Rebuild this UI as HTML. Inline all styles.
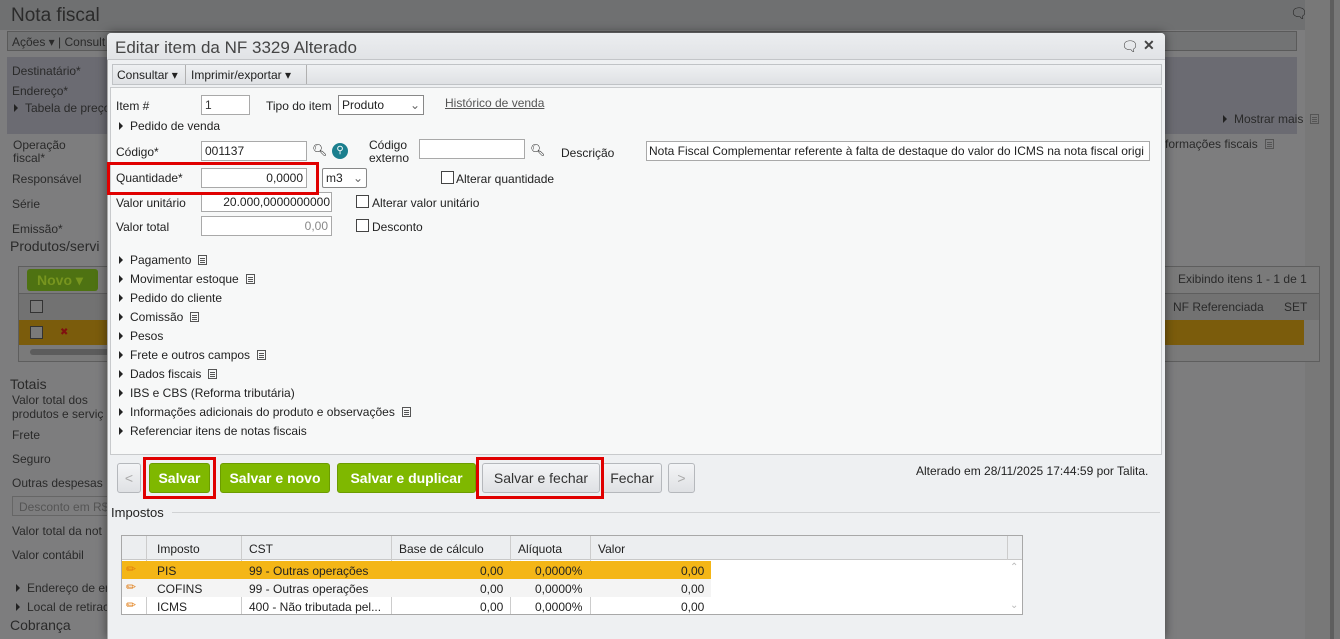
<!DOCTYPE html>
<html><head><meta charset="utf-8"><style>
*{box-sizing:border-box;margin:0;padding:0}
body{width:1340px;height:639px;overflow:hidden;position:relative;background:#7d7d7e;font-family:"Liberation Sans",sans-serif;font-size:12px;color:#222}
.a{position:absolute;white-space:nowrap}
.bg{color:#2a2a2a}
.inp{position:absolute;background:#fff;border:1px solid #a9a9a9;height:20px;font-size:12px;padding:2px 3px;white-space:nowrap;overflow:hidden}
.r{text-align:right}
.tri{display:inline-block;width:0;height:0;border-left:4px solid #222;border-top:4px solid transparent;border-bottom:4px solid transparent;margin-right:7px;vertical-align:0}
.doc{display:inline-block;width:9px;height:10px;border:1px solid #555;margin-left:7px;vertical-align:-1px;background:linear-gradient(#555,#555) 1px 2px/5px 1px no-repeat,linear-gradient(#555,#555) 1px 4px/5px 1px no-repeat,linear-gradient(#555,#555) 1px 6px/5px 1px no-repeat}
.cb{position:absolute;width:13px;height:13px;border:1px solid #444;background:#fff}
.btn{position:absolute;height:30px;top:463px;border-radius:3px;font-size:14px;line-height:28px;text-align:center}
.g{background:#7fb800;color:#fff;font-weight:bold;border:1px solid #6c9c00}
.gr{background:linear-gradient(#f3f4f6,#dfe1e4);border:1px solid #b5b8bc;color:#333}
.red{position:absolute;border:3px solid #e00000}
</style></head><body>
<div class="a" style="left:0;top:0;width:1305px;height:30px;background:#6f7071"></div>
<div class="a" style="left:11px;top:5px;font-size:19px;color:#2b2b2b">Nota fiscal</div>
<div class="a" style="left:1290px;top:5px;font-size:14px;color:#222">🗨 ✕</div>
<div class="a" style="left:1305px;top:0;width:35px;height:639px;background:#787878"></div>
<div class="a" style="left:1330px;top:0;width:4px;height:639px;background:#5e5e5e"></div>
<div class="a" style="left:7px;top:31px;width:1290px;height:20px;background:#727374;border:1px solid #5a5a5a"></div>
<div class="a bg" style="left:12px;top:35px">Ações ▾ | Consult</div>
<div class="a" style="left:7px;top:57px;width:1290px;height:77px;background:#6b6b72"></div>
<div class="a bg" style="left:12px;top:64px">Destinatário*</div>
<div class="a bg" style="left:12px;top:84px">Endereço*</div>
<div class="a bg" style="left:14px;top:101px"><span class="tri"></span>Tabela de preço</div>
<div class="a bg" style="left:13px;top:139px;line-height:13px">Operação<br>fiscal*</div>
<div class="a bg" style="left:12px;top:172px">Responsável</div>
<div class="a bg" style="left:12px;top:197px">Série</div>
<div class="a bg" style="left:12px;top:222px">Emissão*</div>
<div class="a bg" style="left:10px;top:238px;font-size:14px">Produtos/servi</div>
<div class="a bg" style="left:1223px;top:112px"><span class="tri"></span>Mostrar mais<span class="doc"></span></div>
<div class="a bg" style="left:1165px;top:137px">formações fiscais<span class="doc"></span></div>
<div class="a" style="left:18px;top:266px;width:1302px;height:96px;border:1px solid #5e5e5e;background:#7a7a7a"></div>
<div class="a" style="left:27px;top:269px;width:71px;height:22px;background:#4e7212;border-radius:3px;color:#77951e;font-weight:bold;font-size:14px;line-height:22px;padding-left:10px">Novo ▾</div>
<div class="a bg" style="left:1178px;top:272px">Exibindo itens 1 - 1 de 1</div>
<div class="a" style="left:19px;top:293px;width:1300px;height:27px;background:#727272;border-top:1px solid #5e5e5e"></div>
<div class="a bg" style="left:1173px;top:300px">NF Referenciada</div>
<div class="a bg" style="left:1284px;top:300px">SET</div>
<div class="a" style="left:19px;top:320px;width:1285px;height:25px;background:#7b5c0c"></div>
<div class="cb" style="left:30px;top:300px;background:#7a7a7a;border-color:#333"></div>
<div class="cb" style="left:30px;top:326px;background:#7a7a7a;border-color:#333"></div>
<div class="a" style="left:60px;top:327px;color:#801010;font-size:10px">✖</div>
<div class="a" style="left:30px;top:349px;width:80px;height:6px;background:#5c5c5c;border-radius:3px"></div>
<div class="a bg" style="left:10px;top:376px;font-size:14px">Totais</div>
<div class="a bg" style="left:12px;top:393px;line-height:14px">Valor total dos<br>produtos e serviç</div>
<div class="a bg" style="left:12px;top:428px">Frete</div>
<div class="a bg" style="left:12px;top:452px">Seguro</div>
<div class="a bg" style="left:12px;top:476px">Outras despesas</div>
<div class="a" style="left:12px;top:496px;width:100px;height:20px;border:1px solid #666;color:#555;padding:3px 6px">Desconto em R$</div>
<div class="a bg" style="left:12px;top:524px">Valor total da not</div>
<div class="a bg" style="left:12px;top:548px">Valor contábil</div>
<div class="a bg" style="left:16px;top:581px"><span class="tri"></span>Endereço de er</div>
<div class="a bg" style="left:16px;top:600px"><span class="tri"></span>Local de retirac</div>
<div class="a bg" style="left:10px;top:617px;font-size:14px">Cobrança</div>

<div class="a" style="left:107px;top:33px;width:1058px;height:606px;background:#eef0f2;border-left:1px solid #aaa;box-shadow:0 0 10px rgba(0,0,0,.5);border-radius:4px 4px 0 0"></div>
<div class="a" style="left:107px;top:33px;width:1058px;height:27px;background:linear-gradient(#eceef0,#e1e3e6);border-bottom:1px solid #c3c5c8;border-radius:4px 4px 0 0"></div>
<div class="a" style="left:115px;top:38px;font-size:17px;color:#444">Editar item da NF 3329 Alterado</div>
<div class="a" style="left:1121px;top:38px;font-size:14px;color:#444">🗨</div>
<div class="a" style="left:1143px;top:37px;font-size:14px;font-weight:bold;color:#444">✕</div>
<div class="a" style="left:112px;top:64px;width:1050px;height:21px;background:linear-gradient(#eef0f2,#dfe1e4);border:1px solid #c0c3c6"></div>
<div class="a" style="left:117px;top:68px">Consultar ▾</div>
<div class="a" style="left:185px;top:65px;width:1px;height:19px;background:#b0b0b0"></div>
<div class="a" style="left:191px;top:68px">Imprimir/exportar ▾</div>
<div class="a" style="left:306px;top:65px;width:1px;height:19px;background:#b0b0b0"></div>
<div class="a" style="left:110px;top:87px;width:1052px;height:368px;background:#f7f8f8;border:1px solid #c8cacc"></div>

<div class="a" style="left:116px;top:99px">Item #</div>
<div class="inp" style="left:201px;top:95px;width:49px;color:#333">1</div>
<div class="a" style="left:266px;top:99px">Tipo do item</div>
<div class="inp" style="left:338px;top:95px;width:86px;border-color:#888">Produto<span style="float:right;color:#666">⌄</span></div>
<div class="a" style="left:445px;top:96px;color:#555;text-decoration:underline">Histórico de venda</div>
<div class="a" style="left:119px;top:119px"><span class="tri"></span>Pedido de venda</div>
<div class="a" style="left:116px;top:145px">Código*</div>
<div class="inp" style="left:201px;top:141px;width:106px">001137</div>
<div class="a" style="left:312px;top:143px;font-size:12px">&#x1F50D;&#xFE0E;</div>
<div class="a" style="left:332px;top:143px;width:16px;height:16px;border-radius:50%;background:#1b7f8e;color:#fff;font-size:10px;text-align:center;line-height:16px">⚲</div>
<div class="a" style="left:369px;top:139px;line-height:13px">Código<br>externo</div>
<div class="inp" style="left:419px;top:139px;width:106px"></div>
<div class="a" style="left:530px;top:143px">&#x1F50D;&#xFE0E;</div>
<div class="a" style="left:561px;top:146px">Descrição</div>
<div class="inp" style="left:646px;top:141px;width:504px;padding-left:2px">Nota Fiscal Complementar referente à falta de destaque do valor do ICMS na nota fiscal origi</div>
<div class="a" style="left:116px;top:171px">Quantidade*</div>
<div class="inp r" style="left:201px;top:168px;width:106px">0,0000</div>
<div class="inp" style="left:322px;top:168px;width:45px;border-color:#888;border-radius:2px">m3<span style="float:right;color:#666">⌄</span></div>
<div class="cb" style="left:441px;top:171px"></div>
<div class="a" style="left:456px;top:172px">Alterar quantidade</div>
<div class="a" style="left:116px;top:196px">Valor unitário</div>
<div class="inp r" style="left:201px;top:192px;width:131px;padding-right:1px">20.000,0000000000</div>
<div class="cb" style="left:356px;top:195px"></div>
<div class="a" style="left:372px;top:196px">Alterar valor unitário</div>
<div class="a" style="left:116px;top:220px">Valor total</div>
<div class="inp r" style="left:201px;top:216px;width:131px;color:#888">0,00</div>
<div class="cb" style="left:356px;top:219px"></div>
<div class="a" style="left:372px;top:220px">Desconto</div>
<div class="red" style="left:107px;top:162px;width:212px;height:33px"></div>

<div class="a" style="left:119px;top:251px;line-height:19px">
<span class="tri"></span>Pagamento<span class="doc"></span><br>
<span class="tri"></span>Movimentar estoque<span class="doc"></span><br>
<span class="tri"></span>Pedido do cliente<br>
<span class="tri"></span>Comissão<span class="doc"></span><br>
<span class="tri"></span>Pesos<br>
<span class="tri"></span>Frete e outros campos<span class="doc"></span><br>
<span class="tri"></span>Dados fiscais<span class="doc"></span><br>
<span class="tri"></span>IBS e CBS (Reforma tributária)<br>
<span class="tri"></span>Informações adicionais do produto e observações<span class="doc"></span><br>
<span class="tri"></span>Referenciar itens de notas fiscais</div>

<div class="btn gr" style="left:117px;width:24px;color:#aaa">&lt;</div>
<div class="btn g" style="left:149px;width:61px">Salvar</div>
<div class="btn g" style="left:220px;width:110px">Salvar e novo</div>
<div class="btn g" style="left:337px;width:139px">Salvar e duplicar</div>
<div class="btn gr" style="left:482px;width:118px">Salvar e fechar</div>
<div class="btn gr" style="left:602px;width:60px">Fechar</div>
<div class="btn gr" style="left:668px;width:27px;color:#aaa">&gt;</div>
<div class="red" style="left:143px;top:457px;width:73px;height:42px"></div>
<div class="red" style="left:476px;top:457px;width:128px;height:42px"></div>
<div class="a" style="left:916px;top:464px">Alterado em 28/11/2025 17:44:59 por Talita.</div>
<div class="a" style="left:111px;top:505px;font-size:13px">Impostos</div>
<div class="a" style="left:172px;top:512px;width:988px;height:1px;background:#d0d2d4"></div>

<div class="a" style="left:121px;top:535px;width:902px;height:80px;border:1px solid #a8a8a8;background:#fff"></div>
<div class="a" style="left:122px;top:536px;width:900px;height:24px;background:#eceef0;border-bottom:1px solid #c8c8c8"></div>
<div class="a" style="left:146px;top:536px;width:1px;height:78px;background:#ccc"></div>
<div class="a" style="left:241px;top:536px;width:1px;height:78px;background:#ccc"></div>
<div class="a" style="left:391px;top:536px;width:1px;height:78px;background:#ccc"></div>
<div class="a" style="left:510px;top:536px;width:1px;height:78px;background:#ccc"></div>
<div class="a" style="left:590px;top:536px;width:1px;height:78px;background:#ccc"></div>
<div class="a" style="left:1007px;top:536px;width:1px;height:24px;background:#ccc"></div>
<div class="a" style="left:157px;top:542px">Imposto</div>
<div class="a" style="left:249px;top:542px">CST</div>
<div class="a" style="left:399px;top:542px">Base de cálculo</div>
<div class="a" style="left:518px;top:542px">Alíquota</div>
<div class="a" style="left:598px;top:542px">Valor</div>
<div class="a" style="left:122px;top:561px;width:589px;height:18px;background:#f4b617"></div>
<div class="a" style="left:122px;top:579px;width:589px;height:18px;background:#f4f4f4"></div>
<div class="a" style="left:126px;top:562px;color:#e07a10">✏</div>
<div class="a" style="left:126px;top:580px;color:#e07a10">✏</div>
<div class="a" style="left:126px;top:598px;color:#e07a10">✏</div>
<div class="a" style="left:157px;top:564px">PIS</div><div class="a" style="left:249px;top:564px">99 - Outras operações</div><div class="a" style="left:480px;top:564px">0,00</div><div class="a" style="left:535px;top:564px">0,0000%</div><div class="a" style="left:681px;top:564px">0,00</div>
<div class="a" style="left:157px;top:582px">COFINS</div><div class="a" style="left:249px;top:582px">99 - Outras operações</div><div class="a" style="left:480px;top:582px">0,00</div><div class="a" style="left:535px;top:582px">0,0000%</div><div class="a" style="left:681px;top:582px">0,00</div>
<div class="a" style="left:157px;top:600px">ICMS</div><div class="a" style="left:249px;top:600px">400 - Não tributada pel...</div><div class="a" style="left:480px;top:600px">0,00</div><div class="a" style="left:535px;top:600px">0,0000%</div><div class="a" style="left:681px;top:600px">0,00</div>
<div class="a" style="left:1010px;top:562px;color:#bbb;font-size:10px">⌃</div>
<div class="a" style="left:1010px;top:600px;color:#bbb;font-size:10px">⌄</div>
</body></html>
